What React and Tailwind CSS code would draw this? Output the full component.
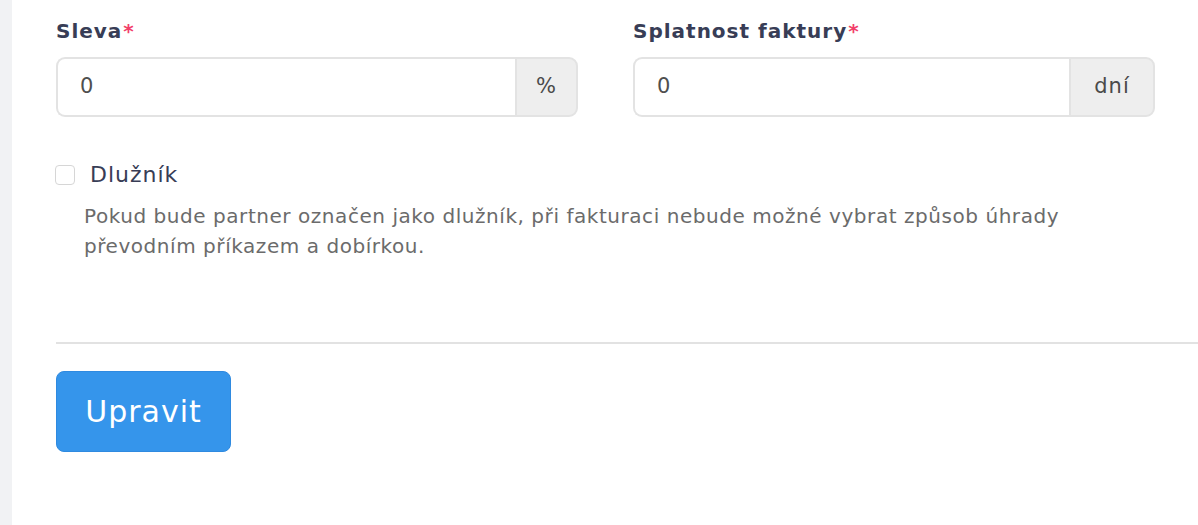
import { useState } from 'react'

// Partner edit form — discount, invoice due date, debtor flag, submit

function AddonField({ label, value, addon, addonWidth }) {
  return (
    <div className="flex flex-col">
      <label className="text-[20px] font-semibold tracking-[1px] text-[#383d56] leading-none h-[40px] flex items-start pt-[4px]">
        {label}
        <span className="text-[#f23f6a] ml-[1px]">*</span>
      </label>
      <div className="flex h-[60px]">
        <input
          defaultValue={value}
          className="flex-1 min-w-0 border-2 border-[#e3e3e3] border-r-0 rounded-l-[9px] px-[22px] text-[21px] text-[#4f4f4f] bg-white outline-none"
        />
        <span
          className={`${addonWidth} flex items-center justify-center bg-[#eeeeee] border-2 border-[#e3e3e3] rounded-r-[9px] text-[21px] tracking-[1px] text-[#4a4a4a]`}
        >
          {addon}
        </span>
      </div>
    </div>
  )
}

export default function App() {
  const [debtor, setDebtor] = useState(false)

  return (
    <div
      className="flex w-[1198px] h-[525px] bg-white overflow-hidden"
      style={{ fontFamily: '"DejaVu Sans", "Noto Sans", sans-serif' }}
    >
      <div className="w-[12px] flex-shrink-0 bg-[#f1f2f4]" />

      <div className="flex-1 pl-[44px] pt-[17px]">
        {/* ── Discount / due date ──────────────────────────── */}
        <div className="grid grid-cols-2 gap-[55px] w-[1099px]">
          <AddonField label="Sleva" value="0" addon="%" addonWidth="w-[63px]" />
          <AddonField label="Splatnost faktury" value="0" addon="dní" addonWidth="w-[86px]" />
        </div>

        {/* ── Debtor checkbox ─────────────────────────────── */}
        <div className="mt-[47px]">
          <label className="flex items-center gap-[15px] cursor-pointer">
            <input
              type="checkbox"
              checked={debtor}
              onChange={e => setDebtor(e.target.checked)}
              className="appearance-none w-[20px] h-[20px] border border-[#d6d6d6] rounded-[4px] bg-white ml-[-1px]"
            />
            <span className="text-[22px] tracking-[1px] text-[#383d56] leading-none">Dlužník</span>
          </label>
          <p className="ml-[28px] mt-[15px] text-[20px] tracking-[0.55px] leading-[30px] text-[#6b6b6b] w-[1060px]">
            Pokud bude partner označen jako dlužník, při fakturaci nebude možné vybrat způsob úhrady
            <br />
            převodním příkazem a dobírkou.
          </p>
        </div>

        {/* ── Divider + submit ────────────────────────────── */}
        <div className="mt-[81px] border-t-2 border-[#e2e2e2]" />
        <button className="mt-[27px] w-[175px] h-[81px] rounded-[8px] bg-[#3595eb] border border-[#2f8ae0] text-white text-[30px] tracking-[1px] leading-none">
          Upravit
        </button>
      </div>
    </div>
  )
}
